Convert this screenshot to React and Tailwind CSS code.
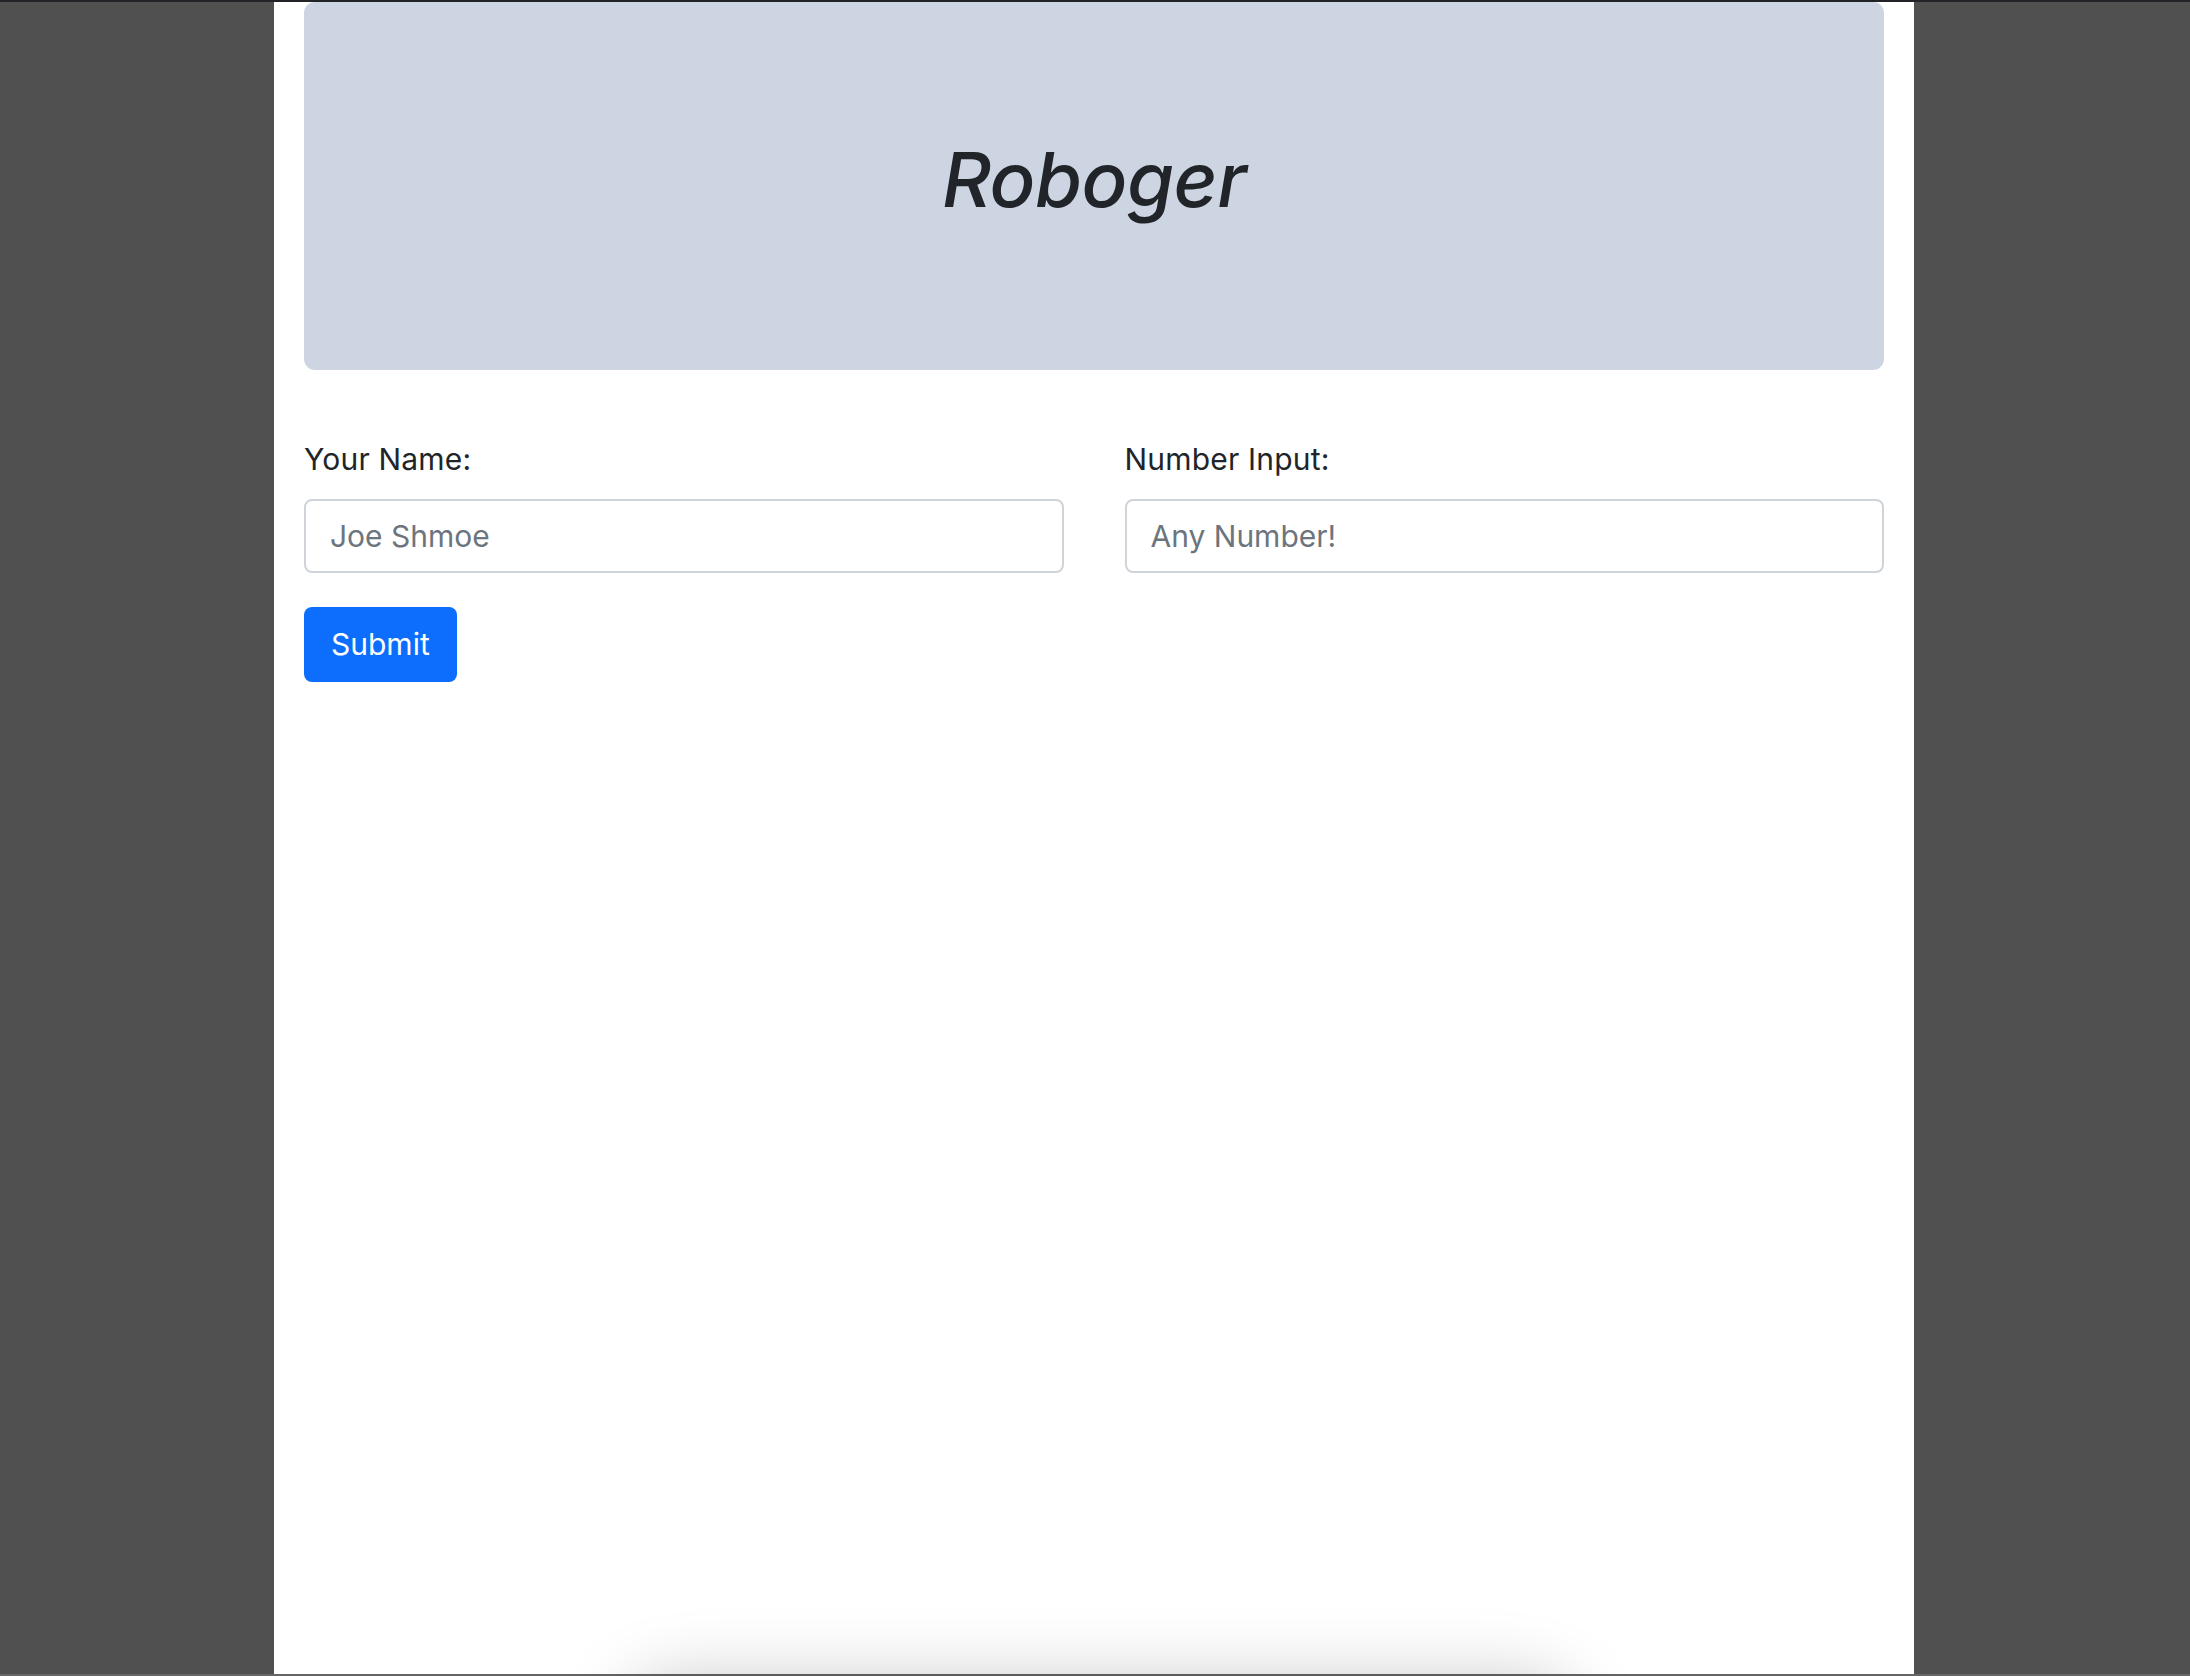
export default function App() {
  return (
    <div className="relative flex h-[1676px] w-full flex-col overflow-hidden bg-[#505050] font-['Inter',sans-serif] text-[#212529]">
      <div className="h-[2px] w-full bg-[#222326]" />

      <div className="ml-[274px] w-[1640px] flex-1 bg-white px-[30px]">
        {/* header */}
        <div className="h-[368px] rounded-[11px] bg-[#cdd5e3] pt-[139px] text-center">
          <h1 className="text-[76px] leading-none font-medium italic tracking-[-0.5px]">Roboger</h1>
        </div>

        {/* form */}
        <form className="mt-[67px]" onSubmit={e => e.preventDefault()}>
          <div className="grid grid-cols-2 gap-x-[61px]">
            <div>
              <label className="mb-[17px] block text-[30px] leading-[45px] tracking-[0.2px]">Your Name:</label>
              <input
                type="text"
                placeholder="Joe Shmoe"
                className="h-[74px] w-full rounded-[8px] border-2 border-[#ced4da] px-[24px] text-[30px] text-[#212529] placeholder-[#6c757d] outline-none"
              />
            </div>
            <div>
              <label className="mb-[17px] block text-[30px] leading-[45px] tracking-[0.2px]">Number Input:</label>
              <input
                type="number"
                placeholder="Any Number!"
                className="h-[74px] w-full rounded-[8px] border-2 border-[#ced4da] px-[24px] text-[30px] text-[#212529] placeholder-[#6c757d] outline-none"
              />
            </div>
          </div>
          <button
            type="submit"
            className="mt-[34px] h-[75px] rounded-[8px] bg-[#0d6efd] px-[27px] text-[30px] text-white"
          >
            Submit
          </button>
        </form>
      </div>

      <div className="h-[2px] w-full bg-[#656565]" />

      {/* shadow of something sitting just below the window */}
      <div className="absolute top-[1700px] left-[640px] h-[80px] w-[920px] rounded-[40px] bg-white shadow-[0_0_70px_20px_rgba(0,0,0,0.22)]" />
    </div>
  )
}
